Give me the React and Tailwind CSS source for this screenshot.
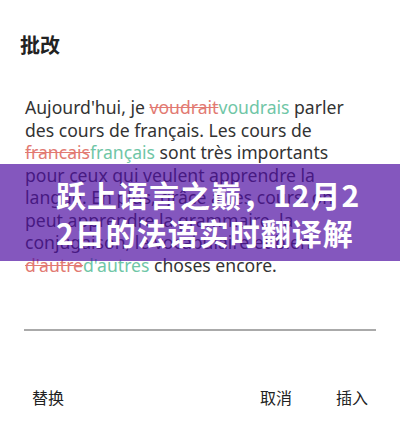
import React from 'react';

const Del = ({ children }) => (
  <span className="text-[#e27a72] line-through decoration-[#e27a72]">{children}</span>
);
const Ins = ({ children }) => <span className="text-[#6fc6a6]">{children}</span>;

export default function App() {
  return (
    <div className="relative w-[400px] h-[425px] overflow-hidden bg-white text-[#333] font-['Noto_Sans','Noto_Sans_CJK_SC',sans-serif]">
      {/* 标题 */}
      <h1 className="pt-[34px] pl-[20px] text-[20px] leading-[24px] font-bold text-[#222]">批改</h1>

      {/* 正文 */}
      <p className="mt-[38px] pl-[25px] pr-[20px] text-[17.6px] leading-[22.5px] text-[#333]">
        Aujourd'hui, je <Del>voudrait</Del><Ins>voudrais</Ins> parler
        <br />
        des cours de français. Les cours de
        <br />
        <Del>francais</Del><Ins>français</Ins> sont très importants
        <br />
        pour ceux qui veulent apprendre la
        <br />
        langue. En plus, grâce à ces cours, on
        <br />
        peut apprendre la grammaire, la
        <br />
        conjugaison, le vocabulaire et bien
        <br />
        <Del>d'autre</Del><Ins>d'autres</Ins> choses encore.
      </p>

      {/* 分隔线 */}
      <div className="mx-[24px] mt-[53px] h-[2px] bg-[#aaa]" />

      {/* 按钮 */}
      <div className="flex items-center mt-[55px] px-[32px] text-[16px] text-[#222]">
        <span>替换</span>
        <span className="ml-auto">取消</span>
        <span className="ml-[44px]">插入</span>
      </div>

      {/* 横幅 */}
      <div className="absolute left-0 right-0 top-[164px] h-[97px] bg-[rgba(80,16,162,0.7)] flex items-center">
        <div className="ml-[56px] w-[312px] h-[76px] overflow-hidden break-all text-[30px] leading-[38px] font-bold tracking-[1px] text-white font-['Noto_Sans_CJK_SC',sans-serif]">
          跃上语言之巅，12月22日的法语实时翻译解析与学习之道
        </div>
      </div>
    </div>
  );
}
